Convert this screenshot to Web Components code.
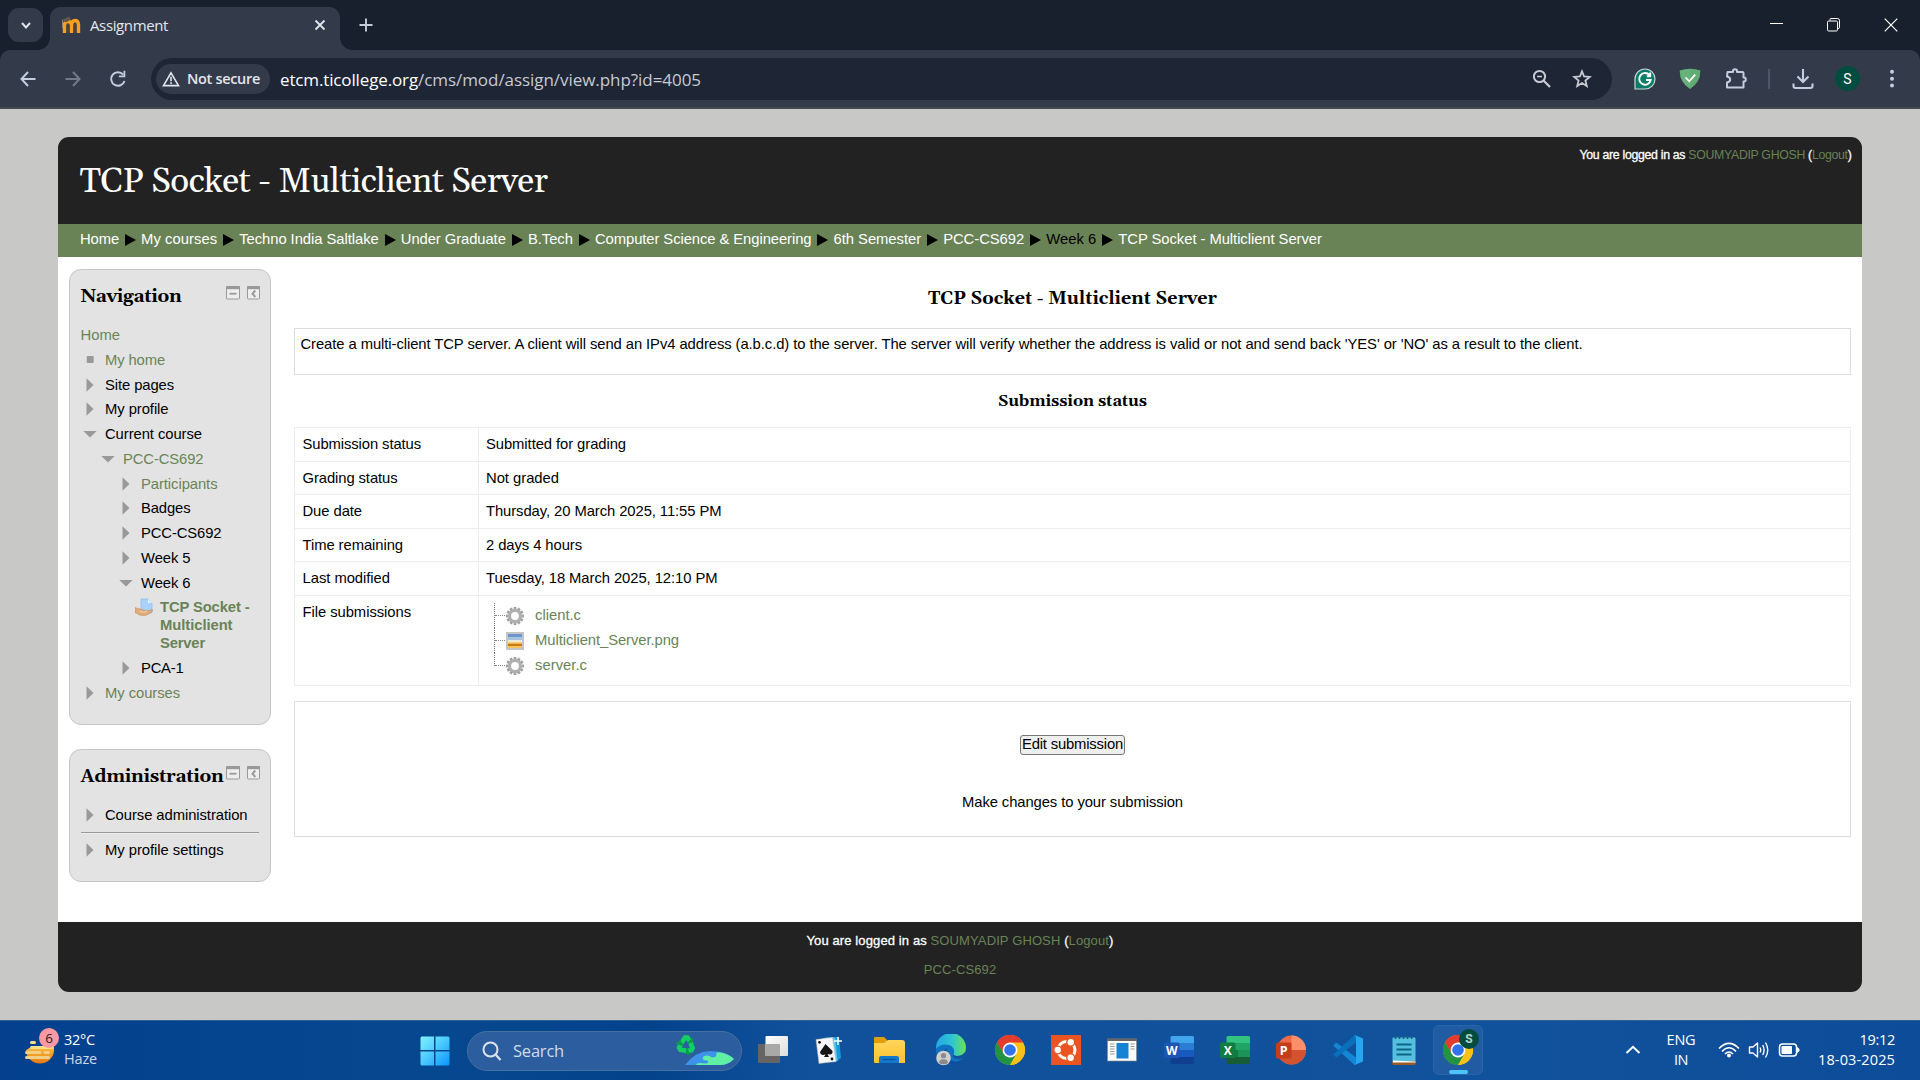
<!DOCTYPE html>
<html lang="en">
<head>
<meta charset="utf-8">
<title>Assignment</title>
<style>
html,body{margin:0;height:100%;overflow:hidden;background:#c8c8c6}
body{font:14.8px "Liberation Sans",Arial,sans-serif;color:#000}
</style>
</head>
<body>
<desktop-screen></desktop-screen>
<script>
const make=(tag,html,setup)=>customElements.define(tag,class extends HTMLElement{
  connectedCallback(){
    if(this.shadowRoot)return;
    const r=this.attachShadow({mode:'open'});
    r.innerHTML=typeof html==='function'?html(this):html;
    if(setup)setup(this,r);
  }
});
const UI='font-family:"Open Sans","Noto Sans",sans-serif;';

const chrome=`<g transform="translate(16 16)"><circle r="15" fill="#fbc116"/><path d="M0 0L-13 -7.5A15 15 0 0 1 13 -7.5Z" fill="#e33b2e"/><path d="M-13 -7.5A15 15 0 0 0 0 15L6.5 3.7L-6.5 3.7Z" fill="#229342"/><path d="M-13 -7.5A15 15 0 0 1 13 -7.5H0L-6.5 3.7Z" fill="#e33b2e"/><path d="M-13 -7.5A15 15 0 0 0 0 15L6.5 3.7A7.500 7.500 0 0 1 -6.500 3.700Z" fill="#229342"/><path d="M0-7.5H13A15 15 0 0 1 0 15L6.5 3.7Z" fill="#fbc116"/><circle r="7.4" fill="#fff"/><circle r="5.8" fill="#2f74ec"/></g>`;
const office=(a,b,c,d,box,ch)=>`<rect x="7.5" y="2" width="23.5" height="28" rx="1.5" fill="${d}"/><path d="M7.500 16V9H31V23H7.500Z" fill="${c}"/><path d="M7.500 9H31V16H7.500Z" fill="${b}"/><path d="M9 2H29.500Q31 2 31 3.500V9H7.500V3.500Q7.500 2 9 2Z" fill="${a}"/><rect x="1" y="8.500" width="15.500" height="15.500" rx="1.500" fill="${box}"/><text x="8.700" y="20.600" text-anchor="middle" font-family="Open Sans" font-weight="700" font-size="12" fill="#fff">${ch}</text>`;
const gear=`<g transform="translate(10 10)"><g stroke-width="2.800">${[...Array(6)].map((_,i)=>`<path d="M0-9V9" transform="rotate(${i*30})" stroke="#a0a0a0"/>`).join('')}</g><circle r="7" fill="#b0b0b0"/><circle r="3.900" fill="#fff"/></g>`;
const ICONS={
 chevdown:[16,16,`<path d="M4 6L8 10.500L12 6" fill="none" stroke="#dfe3ea" stroke-width="2"/>`],
 moodle:[20,20,`<path d="M3.500 18V7.500M10.500 18V9.500M3.500 10Q4 6.500 7 6.500T10.500 10M10.500 10Q11 5.500 14 5.500T17.500 9.500V18" fill="none" stroke="#f7a01d" stroke-width="3.400"/><path d="M7 9V18M14 8.500V18" stroke="#5b4a33" stroke-width="1.200"/><path d="M1 5L8 1.500L10 4.500L5 7.500Z" fill="#5d594f"/><path d="M1.500 5V13" stroke="#8b8577" stroke-width="1"/>`],
 close:[14,14,`<path d="M2.500 2.500L11.500 11.500M11.500 2.500L2.500 11.500" stroke="#dfe3ea" stroke-width="1.900"/>`],
 plus:[14,14,`<path d="M7 .5V13.500M.5 7H13.500" stroke="#c3cad8" stroke-width="1.900"/>`],
 wmin:[14,14,`<path d="M0 5.500H13" stroke="#fff" stroke-width="1"/>`],
 wmax:[14,14,`<path d="M3 2.500V1.500Q3 .5 4 .5H10.500Q12.500 .5 12.500 2.500V9.500Q12.500 10.500 11 10.500" fill="none" stroke="#fff"/><rect x=".5" y="3" width="10" height="10" rx="1.200" fill="none" stroke="#fff"/>`],
 wclose:[14,14,`<path d="M.7 .7L13.300 13.300M13.300 .7L.7 13.300" stroke="#fff" stroke-width="1.200"/>`],
 back:[18,18,`<path d="M9 2L2.500 9L9 16M2.500 9H16.500" fill="none" stroke="#c3cde0" stroke-width="2"/>`],
 fwd:[18,18,`<path d="M9 2L15.500 9L9 16M15.500 9H1.500" fill="none" stroke="#727a8a" stroke-width="2"/>`],
 reload:[18,18,`<path d="M15.500 11A6.800 6.800 0 1 1 14.200 4.600" fill="none" stroke="#c3cde0" stroke-width="2"/><path d="M16.300 .8V7.200H9.900V5.400H14.500V.8Z" fill="#c3cde0"/>`],
 warn:[18,16,`<path d="M9 1.800L16.500 14.600H1.500Z" fill="none" stroke="#e3e6ee" stroke-width="1.600"/><path d="M9 5.800V10.300M9 11.300V13" stroke="#e3e6ee" stroke-width="1.600"/>`],
 zoomout:[20,20,`<circle cx="7.500" cy="7.500" r="5.600" fill="none" stroke="#c7cad1" stroke-width="2"/><path d="M11.500 11.500L18 18" stroke="#c7cad1" stroke-width="2.300"/><path d="M5 7.500H10" stroke="#c7cad1" stroke-width="1.500"/>`],
 star:[20,20,`<path d="M10 2.300L12.100 7.500L17.700 7.900L13.400 11.500L14.800 17L10 14L5.200 17L6.600 11.500L2.300 7.900L7.900 7.500Z" fill="none" stroke="#c7cad1" stroke-width="1.800"/>`],
 gram:[22,22,`<path d="M1 21V11A10 10 0 1 1 11 21Z" fill="#0b7d67" stroke="#c8d6d8" stroke-width="1.200"/><path d="M15.500 7.200A5.800 5.800 0 1 0 16.700 12H12M16.200 4.500V8.200H12.800" fill="none" stroke="#fff" stroke-width="1.900"/>`],
 shield:[22,22,`<path d="M.8 2.500Q11-1 21.200 2.500Q21.800 13.500 11 21Q.2 13.500 .8 2.500Z" fill="#67b279"/><path d="M11 .7Q16 .8 21.200 2.500Q21.800 13.500 11 21Z" fill="#5fa972" opacity=".6"/><path d="M6.500 9.500L10.300 13.300L16.200 6.600" fill="none" stroke="#fff" stroke-width="1.700"/>`],
 puzzle:[22,22,`<path d="M2.500 4H8V3Q8 1.200 10 1.200T12 3V4H17.500Q18.500 4 18.500 5V9.500H19Q20.800 9.500 20.800 11.500T19 13.500H18.500V19.500H2V14.500Q5.200 13.800 5.200 11.500T2 8.500Z" fill="none" stroke="#c3cde0" stroke-width="2" stroke-linejoin="round"/>`],
 down:[22,22,`<path d="M11 1V13.500M5.500 8.500L11 14L16.500 8.500M1.500 15.500V18Q1.500 20 3.500 20H18.500Q20.500 20 20.500 18V15.500" fill="none" stroke="#c3cde0" stroke-width="2.100"/>`],
 dots:[6,20,`<circle cx="3" cy="2.700" r="2" fill="#c3cde0"/><circle cx="3" cy="9.700" r="2" fill="#c3cde0"/><circle cx="3" cy="16.600" r="2" fill="#c3cde0"/>`],
 sep:[11,14,`<path d="M0 1L11 7L0 13Z" fill="#000"/>`],
 bmin:[14,14,`<rect x=".5" y=".5" width="13" height="12.500" rx="1" fill="#eee" stroke="#999"/><path d="M0 1.700H14" stroke="#999" stroke-width="3"/><path d="M3.500 7.700H10.500" stroke="#999" stroke-width="1.800"/>`],
 bdock:[13,14,`<rect x=".5" y=".5" width="12" height="12.500" rx="1" fill="#eee" stroke="#999"/><path d="M0 1.700H13" stroke="#999" stroke-width="3"/><path d="M8.300 4.500L5.500 7.700L8.300 11" fill="none" stroke="#999" stroke-width="2"/>`],
 tright:[14,14,`<path d="M3.500 .3L10.500 7L3.500 13.700Z" fill="#999"/>`],
 tdown:[14,14,`<path d="M.3 4H13.700L7 10.500Z" fill="#999"/>`],
 tdot:[14,14,`<rect x="3.700" y="3" width="7" height="7" rx="1" fill="#999"/>`],
 assign:[18,18,`<path d="M6 1H13L17 5V15H6Z" fill="#a9d1fb" stroke="#8bb9ee" stroke-width=".7"/><path d="M13 1V5H17" fill="#e3f1ff"/><path d="M0 9.500Q3 11 5.500 11L12 13Q17 11 18 12Q16 15.500 11 17.300Q5 18.500 0 14.500Z" fill="#e0ad7c" stroke="#c48a55" stroke-width=".6"/><path d="M5 13.500Q9 15 12 13.300" stroke="#f5d5b0" fill="none"/>`],
 gear:[20,20,gear],
 image:[18,18,`<rect width="18" height="18" fill="#c5c5c5"/><rect x="2" y="2" width="14" height="4" fill="#6d96ca"/><rect x="2" y="5" width="14" height="3" fill="#a9c3df"/><rect x="2" y="8" width="14" height="3" fill="#f0eadb"/><rect x="2" y="10.500" width="14" height="2" fill="#f4b542"/><rect x="2" y="12" width="14" height="2" fill="#c87b14"/><rect x="2" y="14" width="14" height="2" fill="#f3c35e"/>`],
 weather:[30,36,`<defs><linearGradient id="a" x2="0" y2="1"><stop stop-color="#f9c13c"/><stop offset="1" stop-color="#ea7a13"/></linearGradient></defs><path d="M1 21A14 13.500 0 0 0 29 21V17H8Z" fill="url(#a)"/><g stroke="#fadf84" stroke-width="3" stroke-linecap="round"><path d="M6.500 13.500H9.500M6.500 18.500H27"/><path d="M1.500 23.500H15M20 23.500H23.500M1.500 28.500H23.500" stroke="#f1cf84"/></g>`],
 win:[30,30,`<defs><linearGradient id="a" x2="1" y2="1"><stop stop-color="#84f2ff"/><stop offset=".5" stop-color="#49c8fd"/><stop offset="1" stop-color="#0a94fb"/></linearGradient></defs><path d="M2 .5H14V14H.5V2Q.5.5 2 .5ZM15.500 .5H28Q29.500.5 29.500 2V14H15.500ZM.5 15.500H14V29.500H2Q.5 29.500.5 28ZM15.500 15.500H29.500V28Q29.500 29.500 28 29.500H15.500Z" fill="url(#a)"/>`],
 mag:[20,20,`<circle cx="8.500" cy="8.500" r="7" fill="none" stroke="#dbe3ee" stroke-width="2"/><path d="M13.500 13.500L18.500 19" stroke="#dbe3ee" stroke-width="2.200"/>`],
 eco:[62,34,`<g transform="translate(12 12)" fill="none" stroke="#12cf62" stroke-width="4.800"><g><path d="M-4.500 -3L-1 -8.300H1.500L4 -4.500"/><path d="M1 -3L7.500 -2.500L7 -9Z" fill="#0a9a48" stroke="none"/></g><g transform="rotate(120 0 -.5)"><path d="M-4.500 -3L-1 -7.500H1.500L4 -4"/><path d="M1 -3L7.500 -2.500L7 -9Z" fill="#0a9a48" stroke="none"/></g><g transform="rotate(240 0 -.5)"><path d="M-4.500 -3L-1 -7.500H1.500L4 -4"/><path d="M1 -3L7.500 -2.500L7 -9Z" fill="#0a9a48" stroke="none"/></g></g><path d="M11 31Q21 17.500 36 17Q52 17 60 25Q54 31 46 31Z" fill="#3f92ea"/><path d="M22 31Q23 28 31 29.500Q36 29 33.500 26.500Q28 27 29 23Q33 20 38 23.500Q44 23 42 19.500Q44 17.500 47 18.500Q55 20 60 25Q54 31 46 31Z" fill="#5ff0a4"/>`],
 taskview:[32,32,`<defs><linearGradient id="a" x2="1" y2="1"><stop stop-color="#fff"/><stop offset="1" stop-color="#dcdcdc"/></linearGradient></defs><rect x="1" y="10" width="22" height="19" rx="1" fill="#666564"/><rect x="8.500" y="2" width="22.500" height="20" rx="1" fill="url(#a)"/><path d="M8.500 10H22Q23 10 23 11V22H8.500Z" fill="#a9a9a8"/>`],
 cards:[32,32,`<path d="M12 3.500L26 3L28 24L23 28L14 26Z" fill="#139bdc"/><path d="M10 4L22 3.500L24.500 27L14 28Z" fill="#6bc5ee"/><path d="M3 5.500L19.500 3.500L23 27.500L6 29.500Z" fill="#f7f7f7" stroke="#bbb" stroke-width=".5"/><path d="M12.500 10L19.500 17Q20 21.500 14.500 20L16 23H11L12.500 20.500Q7.500 22 7 18Z" fill="#151515"/><circle cx="6.500" cy="8.300" r="1.400" fill="#111"/><circle cx="19" cy="25" r="1.400" fill="#111"/><path d="M25 3V11M21 7H29" stroke="#fff" stroke-width="1.500"/>`],
 folder:[34,32,`<path d="M2 4Q2 3 3 3H12L15 6V13H2Z" fill="#e19d0a"/><defs><linearGradient id="a" x2="0" y2="1"><stop stop-color="#ffd65a"/><stop offset="1" stop-color="#fcc131"/></linearGradient></defs><path d="M2 9H12L16 6H30Q33 6 33 9V29H3Q2 29 2 28Z" fill="url(#a)"/><path d="M7 29V24Q7 22 9 22H25Q27 22 27 24V29Z" fill="#1478ca"/><path d="M10.500 25.500H23.500" stroke="#0b51a0" stroke-width="1.200"/>`],
 edge:[32,32,`<defs><linearGradient id="a"><stop stop-color="#24a6e4"/><stop offset=".55" stop-color="#2fc5d2"/><stop offset="1" stop-color="#6de34d"/></linearGradient></defs><circle cx="16" cy="16" r="15" fill="#1272c2"/><path d="M1 15A15 15 0 0 1 31 13Q31 22 22 22Q17.500 22 19 19Q20 13 14 11Q6 9 1 15Z" fill="url(#a)"/><path d="M12 14Q9 20 14 25Q21 31 29.500 23.500Q26 31 17 31Q9 30 8 22Q8 16 12 14Z" fill="#0b4f9c"/><path d="M19 19Q17.500 22 22 22Q27 22 29.500 18.500L31.500 20L29.500 23.500Q22 27 17.500 22.500Z" fill="#11529d"/><circle cx="8.500" cy="24" r="7.300" fill="#cfcfcf"/><circle cx="8.500" cy="21.700" r="2.600" fill="#8a8a8a"/><path d="M4 29Q4 25.200 8.500 25.200T13 29Q8.500 31.500 4 29Z" fill="#8a8a8a"/>`],
 chrome:[32,32,chrome],
 ubuntu:[32,32,`<rect x="1" y="1" width="30" height="30" fill="#e95420"/><circle cx="16.500" cy="16" r="8.500" fill="none" stroke="#fff" stroke-width="3"/><g stroke="#e95420" stroke-width="1.400" fill="#fff"><circle cx="7.700" cy="16" r="3.900"/><circle cx="20.700" cy="8.300" r="3.900"/><circle cx="20.700" cy="23.700" r="3.900"/></g>`],
 winapp:[32,32,`<rect x="1.500" y="5" width="29" height="22" fill="#fafafa" stroke="#888" stroke-width=".6"/><rect x="1" y="4.500" width="30" height="2.500" fill="#666"/><rect x="10.500" y="9" width="12" height="15.500" fill="#1583d4"/><path d="M4 10H8.500M4 12.500H8.500M4 15H8.500M4 17.500H8.500M4 20H8.500M24.500 10H28.500M24.500 12.500H28.500M24.500 15H28.500" stroke="#999" stroke-width="1"/>`],
 word:[32,32,office('#41a5ee','#2b7cd3','#185abd','#103f91','#1b56b5','W')],
 excel:[32,32,office('#33c481','#21a366','#107c41','#185c37','#107c41','X')+'<path d="M16.500 2H29.500Q31 2 31 3.500V9H19V16H31V23H19V9H16.500Z" fill="#33c481" opacity=".35"/>'],
 ppt:[32,32,`<circle cx="16.500" cy="16" r="14.500" fill="#ed6c47"/><path d="M16.500 1.500A14.500 14.500 0 0 1 31 16H16.500Z" fill="#ff8f6b"/><path d="M2 16A14.500 14.500 0 0 0 31 16Z" fill="#d35230"/><rect x="1" y="8.500" width="15.500" height="16" rx="1.500" fill="#c43e1c"/><text x="8.700" y="21" text-anchor="middle" font-family="Open Sans" font-weight="700" font-size="12.500" fill="#fff">P</text>`],
 vscode:[32,32,`<path d="M1.200 11.500L4.300 8.400L24 23.500V31H22.500Z" fill="#1487d4"/><path d="M1.200 20.500L22.500 1H24V8.500L4.300 23.600Z" fill="#0a70bb"/><path d="M22.500 1L31 4.500V27.500L22.500 31Q24 30 24 27V5Q24 2 22.500 1Z" fill="#25a7f0"/>`],
 notepad:[32,32,`<rect x="4.500" y="3.500" width="23" height="26" rx="1" fill="#55c0dd"/><path d="M4.500 27H27.500V30Q27.500 31 26.500 31H5.500Q4.500 31 4.500 30Z" fill="#9a5b23"/><path d="M5 26.500L27.500 27.500V28.500H5Z" fill="#fff"/><path d="M8.500 10.500H23.500M8.500 15.500H23.500M8.500 20.500H23.500" stroke="#0d6587" stroke-width="1.800"/><path d="M7.500 2V5M11.500 2V5M15.500 2V5M19.500 2V5M23.500 2V5" stroke="#155d7d" stroke-width="1.500"/>`],
 up:[16,10,`<path d="M1.500 8L8 1.800L14.500 8" fill="none" stroke="#fff" stroke-width="2"/>`],
 wifi:[22,18,`<g fill="none" stroke="#fff" stroke-width="1.600"><path d="M1 7.500Q11-2.800 21 7.500"/><path d="M4 10.500Q11 3 18 10.500"/><path d="M7 13Q11 9 15 13"/></g><circle cx="11" cy="14.500" r="2" fill="#fff"/>`],
 sound:[22,18,`<path d="M1.500 6H5L9.500 2V16L5 12H1.500Z" fill="none" stroke="#fff" stroke-width="1.400" stroke-linejoin="round"/><path d="M12 6.500Q13.500 9 12 11.500M14.700 4Q17.500 9 14.700 14M17.500 1.500Q22 9 17.500 16.500" fill="none" stroke="#fff" stroke-width="1.400"/>`],
 batt:[22,16,`<rect x="1.500" y="2" width="17" height="12" rx="3" fill="none" stroke="#fff" stroke-width="1.500"/><rect x="3.500" y="4" width="10.500" height="8" rx="1" fill="#fff"/><path d="M19 5.500L21 7V9L19 10.500Z" fill="#fff" stroke="#fff"/>`],
};
make('x-icon',e=>{const [w,h,s]=ICONS[e.getAttribute('name')];return `<style>:host{display:inline-flex;flex:none}svg{display:block}</style><svg width="${w}" height="${h}" viewBox="0 0 ${w} ${h}">${s}</svg>`});

make('tab-strip',`<style>
:host{display:flex;height:50px;background:#18202e;box-sizing:border-box;padding-left:8px;${UI}}
.s{width:35px;height:34px;margin-top:8px;border-radius:11px;background:#333b4b;display:flex;align-items:center;justify-content:center}
.tab{width:290px;height:43px;margin:7px 0 0 7px;box-sizing:border-box;border-radius:11px 11px 0 0;background:#333b4b;display:flex;align-items:center;padding:0 13px 7px 11px;position:relative;color:#e3e6ee;font-size:15px}
.tab:before,.tab:after{content:"";position:absolute;bottom:0;width:12px;height:12px}
.tab:before{left:-12px;background:radial-gradient(circle at 0 0,transparent 11.500px,#333b4b 12px)}
.tab:after{right:-12px;background:radial-gradient(circle at 100% 0,transparent 11.500px,#333b4b 12px)}
.t{flex:1;margin-left:9px}
.new{margin:18px 0 0 19px}
.w{margin-left:auto;display:flex;gap:43px;padding:18px 22px 0 0}
</style><div class="s"><x-icon name="chevdown"></x-icon></div>
<div class="tab"><x-icon name="moodle"></x-icon><span class="t"><t-fit w="78">Assignment</t-fit></span><x-icon name="close"></x-icon></div>
<x-icon class="new" name="plus"></x-icon><div class="w"><x-icon name="wmin"></x-icon><x-icon name="wmax"></x-icon><x-icon name="wclose"></x-icon></div>`);

make('tool-bar',`<style>
:host{display:block;background:#18202e}
.b{display:flex;align-items:center;height:59px;box-sizing:border-box;background:#333b4b;border-bottom:2px solid #434951;border-radius:10px 10px 0 0;${UI}}
.b>x-icon{margin-top:1px}
.box{margin-left:24px;width:1461px;height:42px;border-radius:21px;background:#1e2636;display:flex;align-items:center;box-sizing:border-box;padding:0 20px 0 5px;color:#c7cad1;font-size:17px;margin-top:1px}
.chip{width:114px;height:30px;border-radius:15px;background:#333b4b;display:flex;align-items:center;padding-left:6px;gap:7px;box-sizing:border-box;color:#e3e6ee;font-size:14.500px;font-weight:600}
.chip t-fit{margin-top:-2px}
.u{margin-left:10px;flex:1}.h{color:#fff}
.av{width:25px;height:25px;border-radius:50%;background:#004d40;color:#fff;font:14px Roboto,sans-serif;display:flex;align-items:center;justify-content:center;margin-left:21px}
.d{width:2px;height:20px;background:#4d5566;margin-left:21px}
</style><div class="b"><x-icon name="back" style="margin-left:19px"></x-icon><x-icon name="fwd" style="margin-left:27px"></x-icon><x-icon name="reload" style="margin-left:27px"></x-icon>
<div class="box"><div class="chip"><x-icon name="warn"></x-icon><t-fit w="73">Not secure</t-fit></div><div class="u"><t-fit class="h" w="138">etcm.ticollege.org</t-fit><t-fit w="283">/cms/mod/assign/view.php?id=4005</t-fit></div><x-icon name="zoomout"></x-icon><x-icon name="star" style="margin-left:20px"></x-icon></div>
<x-icon name="gram" style="margin-left:22px"></x-icon><x-icon name="shield" style="margin-left:23px"></x-icon><x-icon name="puzzle" style="margin-left:24px"></x-icon><div class="d"></div><x-icon name="down" style="margin-left:22px"></x-icon><div class="av">S</div><x-icon name="dots" style="margin-left:29px"></x-icon></div>`);

make('login-info',e=>`<style>:host{display:block;color:#fff;-webkit-text-stroke:.3px #fff}i{font-style:normal;color:#698357;-webkit-text-stroke:0}</style><t-fit w="${e.getAttribute('w')}">You are logged in as <i>SOUMYADIP GHOSH</i> (<i>Logout</i>)</t-fit>`);
make('site-header',`<style>:host{display:flex;justify-content:space-between;height:87px;background:#222;padding:0 10.500px 0 21.500px;border-radius:11px 11px 0 0}
h1{margin:20.500px 0 0;font:35px/48px Georgia,Gelasio,"Liberation Serif",serif;color:#fff}
login-info{font-size:12.300px;line-height:18px;margin-top:9px}</style><h1><t-fit w="468">TCP Socket - Multiclient Server</t-fit></h1><login-info w="272"></login-info>`);
make('bread-crumbs',`<style>:host{display:flex;align-items:center;height:33px;background:#698357;color:#fff;padding:0 22px 3px;box-sizing:border-box}
x-icon{margin:0 5.100px 0 6px;padding-top:2px}.k{color:#000}</style>`+[['Home',39],['My courses',76],['Techno India Saltlake',139.5],['Under Graduate',105],['B.Tech',45],['Computer Science & Engineering',216.5],['6th Semester',87.5],['PCC-CS692',81],['Week 6',50],['TCP Socket - Multiclient Server',203.5]].map(([t,w])=>`<t-fit class="${t=='Week 6'?'k':''}" w="${w}">${t.replace('&','&amp;')}</t-fit>`).join('<x-icon name="sep"></x-icon>'));

make('side-block',e=>`<style>:host{display:block;box-sizing:border-box;width:202px;background:#e3e3e3;border:1px solid #c6c6c6;border-radius:12px;padding:14.500px 10px 0 10.500px}
header{display:flex;height:24px;margin-bottom:14.500px}
h2{margin:0;flex:1;white-space:nowrap;font:bold 18.500px/24px Georgia,Gelasio,"Liberation Serif",serif}
x-icon{margin-top:1.500px}x-icon+x-icon{margin-left:7px}</style><header><h2><t-fit w="${e.getAttribute('w')}">${e.getAttribute('heading')}</t-fit></h2><x-icon name="bmin"></x-icon><x-icon name="bdock"></x-icon></header><slot></slot>`);
make('tree-item',e=>{const l=+e.getAttribute('level')||0;return `<style>:host{display:flex;line-height:24.750px;padding-left:${l?(l-1)*18+2:0}px;color:#000}:host([link]){color:#698357}
x-icon{margin:5px 8.500px 0 0}.a{margin:3px 7.500px 0 -2px}</style>${l?`<x-icon class="${e.getAttribute('icon')=='assign'?'a':''}" name="${e.getAttribute('icon')}"></x-icon>`:''}<slot></slot>`});

make('status-row',e=>`<style>:host{display:flex;border:1px solid #ececec;border-top:0;box-sizing:border-box;height:33.600px;line-height:33px}
:host([tall]){height:90px}:host([first]){border-top:1px solid #ececec;height:34.600px}
.l{width:175px;padding-left:7.500px;border-right:1px solid #ececec}.v{padding-left:7.500px}</style><div class="l"><t-fit w="${e.getAttribute('lw')}">${e.getAttribute('label')}</t-fit></div><div class="v"><slot></slot></div>`);
make('file-tree',`<style>:host{display:block;padding:7.500px 0 0 8px;color:#698357}
div{display:flex;align-items:center;height:25px;line-height:25px;position:relative}
div:before{content:"";height:25px;border-left:1px dotted #777;align-self:flex-start}div:last-child:before{height:13px}
div:after{content:"";position:absolute;left:1px;top:12px;width:10px;border-top:1px dotted #888}
x-icon{width:20px;margin:0 10px 0 10px;justify-content:center}</style>
<div><x-icon name="gear"></x-icon><t-fit w="46">client.c</t-fit></div><div><x-icon name="image"></x-icon><t-fit w="144">Multiclient_Server.png</t-fit></div><div><x-icon name="gear"></x-icon><t-fit w="52">server.c</t-fit></div>`);

make('assign-view',`<style>:host{display:block;width:1557px}
h2,h3{margin:0;text-align:center;font-family:Georgia,Gelasio,"Liberation Serif",serif}
h2{font-size:18px;line-height:24px;padding-top:17.500px}h3{font-size:16px;line-height:24px;margin:14px 0}
.box{border:1px solid #ddd;box-sizing:border-box}
.intro{height:47px;margin-top:17.500px;padding:0 5.500px;line-height:30px}
.edit{height:136px;margin-top:15px;display:flex;flex-direction:column;align-items:center;padding-top:33px}
button{font:14.800px/17px "Liberation Sans",sans-serif;width:105px;height:20px;padding:0;border:1px solid #767676;border-radius:3px;background:#efefef;color:#000;white-space:nowrap}
p{margin:37px 0 0;line-height:20px}</style>
<h2><t-fit w="289">TCP Socket - Multiclient Server</t-fit></h2>
<div class="box intro"><t-fit w="1282">Create a multi-client TCP server. A client will send an IPv4 address (a.b.c.d) to the server. The server will verify whether the address is valid or not and send back 'YES' or 'NO' as a result to the client.</t-fit></div>
<h3><t-fit w="149">Submission status</t-fit></h3>
<status-row first label="Submission status" lw="118.500"><t-fit w="140">Submitted for grading</t-fit></status-row>
<status-row label="Grading status" lw="95"><t-fit w="73">Not graded</t-fit></status-row>
<status-row label="Due date" lw="59.500"><t-fit w="235.500">Thursday, 20 March 2025, 11:55 PM</t-fit></status-row>
<status-row label="Time remaining" lw="100.500"><t-fit w="96">2 days 4 hours</t-fit></status-row>
<status-row label="Last modified" lw="87.500"><t-fit w="231.500">Tuesday, 18 March 2025, 12:10 PM</t-fit></status-row>
<status-row tall label="File submissions" lw="108.500"><file-tree></file-tree></status-row>
<div class="box edit"><button><t-fit w="101">Edit submission</t-fit></button><p><t-fit w="221">Make changes to your submission</t-fit></p></div>`);

make('moodle-page',`<style>:host{display:flex;flex-direction:column;margin:28px 58px 0;height:855px}
.main{display:flex;flex:1;background:#fff;padding:12px 11px 0;gap:23px;min-height:0}
aside{display:flex;flex-direction:column;gap:24px}
.n{height:456px}.m{height:133px}
b{display:block;line-height:18px;padding-top:3px}b t-fit{display:block}
hr{margin:4px 0;border:0;border-top:1px solid #999;border-bottom:1px solid #eee;width:178px}
footer{height:70px;background:#222;border-radius:0 0 11px 11px;text-align:center;font-size:13px;line-height:18px;color:#698357}
login-info{padding-top:10px}p{margin:11px 0 0}</style>
<site-header></site-header><bread-crumbs></bread-crumbs>
<div class="main"><aside><side-block class="n" heading="Navigation" w="101">
<tree-item link><t-fit w="39.500">Home</t-fit></tree-item>
<tree-item level="1" icon="tdot" link><t-fit w="60">My home</t-fit></tree-item>
<tree-item level="1" icon="tright"><t-fit w="69">Site pages</t-fit></tree-item>
<tree-item level="1" icon="tright"><t-fit w="63.500">My profile</t-fit></tree-item>
<tree-item level="1" icon="tdown"><t-fit w="97">Current course</t-fit></tree-item>
<tree-item level="2" icon="tdown" link><t-fit w="80.500">PCC-CS692</t-fit></tree-item>
<tree-item level="3" icon="tright" link><t-fit w="76.500">Participants</t-fit></tree-item>
<tree-item level="3" icon="tright"><t-fit w="49.500">Badges</t-fit></tree-item>
<tree-item level="3" icon="tright"><t-fit w="80.500">PCC-CS692</t-fit></tree-item>
<tree-item level="3" icon="tright"><t-fit w="49.500">Week 5</t-fit></tree-item>
<tree-item level="3" icon="tdown"><t-fit w="49.500">Week 6</t-fit></tree-item>
<tree-item level="4" icon="assign" link style="height:61px"><b><t-fit w="89.500">TCP Socket -</t-fit><t-fit w="72.500">Multiclient</t-fit><t-fit w="45">Server</t-fit></b></tree-item>
<tree-item level="3" icon="tright"><t-fit w="42.500">PCA-1</t-fit></tree-item>
<tree-item level="1" icon="tright" link><t-fit w="75">My courses</t-fit></tree-item>
</side-block><side-block class="m" heading="Administration" w="143">
<tree-item level="1" icon="tright"><t-fit w="142.500">Course administration</t-fit></tree-item><hr>
<tree-item level="1" icon="tright"><t-fit w="118.500">My profile settings</t-fit></tree-item></side-block></aside>
<assign-view></assign-view></div>
<footer><login-info w="307"></login-info><p><t-fit w="72.500">PCC-CS692</t-fit></p></footer>`);

make('task-bar',`<style>:host{display:flex;align-items:center;height:60px;margin-top:28px;box-sizing:border-box;border-top:1px solid #2d5f93;background:linear-gradient(90deg,#04408e 0,#064890 23%,#04428c 34%,#11519c 42%,#11529d 80%,#0d4c98);color:#fff;${UI}font-size:14.500px;line-height:20px}
.we{display:flex;position:relative;margin:-3px 0 0 25px;width:395px;gap:9px}.bd{position:absolute;left:14px;top:-1px;width:20px;height:20px;border-radius:50%;background:#ff99a4;color:#1c1c1c;text-align:center;font-size:13.500px}
.we span{color:#c9d8ec}.we div div{padding-top:1px;margin-bottom:-1px}
.se{width:275px;height:40px;box-sizing:border-box;border-radius:20px;background:#2c5d9e;border:1px solid #46709f;margin:0 3px 0 17px;display:flex;align-items:center;padding:0 5px 0 14px;color:#d0dbea;font-size:16.500px}
.se t-fit{margin-left:11px}.se x-icon:last-child{margin-left:auto}
.c{width:56.300px;display:flex;justify-content:center;margin-top:-1px}
.on{position:relative;width:50px;height:50px;box-sizing:border-box;border-radius:6px;background:#215ca3;border:1px solid #2b65a9;align-items:center;margin-left:1px}
.on i{position:absolute;right:3px;top:3px;width:20px;height:20px;border-radius:50%;background:#004d40;font:bold 12px/20px Roboto;text-align:center;color:#b9d6d0}
.on u{position:absolute;left:15px;bottom:0;width:19px;height:4px;border-radius:2px;background:#4cc2ff}
.tr{margin:-2px 0 0 auto;display:flex;align-items:center;padding-right:25px;text-align:center}.dt{text-align:right;width:77px;margin-left:18.500px}
</style><div class="we"><x-icon name="weather"></x-icon><b class="bd" style="font-weight:400">6</b><div><div><t-fit w="31">32°C</t-fit></div><span><t-fit w="33">Haze</t-fit></span></div></div>
<x-icon name="win"></x-icon><div class="se"><x-icon name="mag"></x-icon><t-fit w="51">Search</t-fit><x-icon name="eco"></x-icon></div>
${['taskview','cards','folder','edge','chrome','ubuntu','winapp','word','excel','ppt','vscode','notepad'].map((n,i)=>`<div class="c" ${i==2||i==3?'style="width:62px"':''}><x-icon name="${n}"></x-icon></div>`).join('')}
<div class="c on"><x-icon name="chrome"></x-icon><i>S</i><u></u></div>
<div class="tr"><x-icon name="up"></x-icon><div style="margin:0 22px 0 26px"><t-fit w="29">ENG</t-fit><br><t-fit w="14">IN</t-fit></div><x-icon name="wifi"></x-icon><x-icon name="sound" style="margin-left:8px"></x-icon><x-icon name="batt" style="margin-left:8px"></x-icon><div class="dt"><t-fit w="35.500">19:12</t-fit><br><t-fit w="77">18-03-2025</t-fit></div></div>`);

make('desktop-screen',`<style>:host{display:block;width:1920px;height:1080px;overflow:hidden;background:#c8c8c6}</style><tab-strip></tab-strip><tool-bar></tool-bar><moodle-page></moodle-page><task-bar></task-bar>`);

/* Inline label whose letter-spacing is adjusted so that it spans the width in its "w" attribute. */
make('t-fit',`<style>:host{display:inline-block;white-space:nowrap;text-align:left}</style><slot></slot>`,e=>{
  const r=document.createRange();r.selectNodeContents(e);
  const nat=r.getBoundingClientRect().width,w=+e.getAttribute('w'),n=e.textContent.length;
  e.style.letterSpacing=((w-nat)/n)+'px';
  e.style.width=w+'px';
});
</script>
</body>
</html>
